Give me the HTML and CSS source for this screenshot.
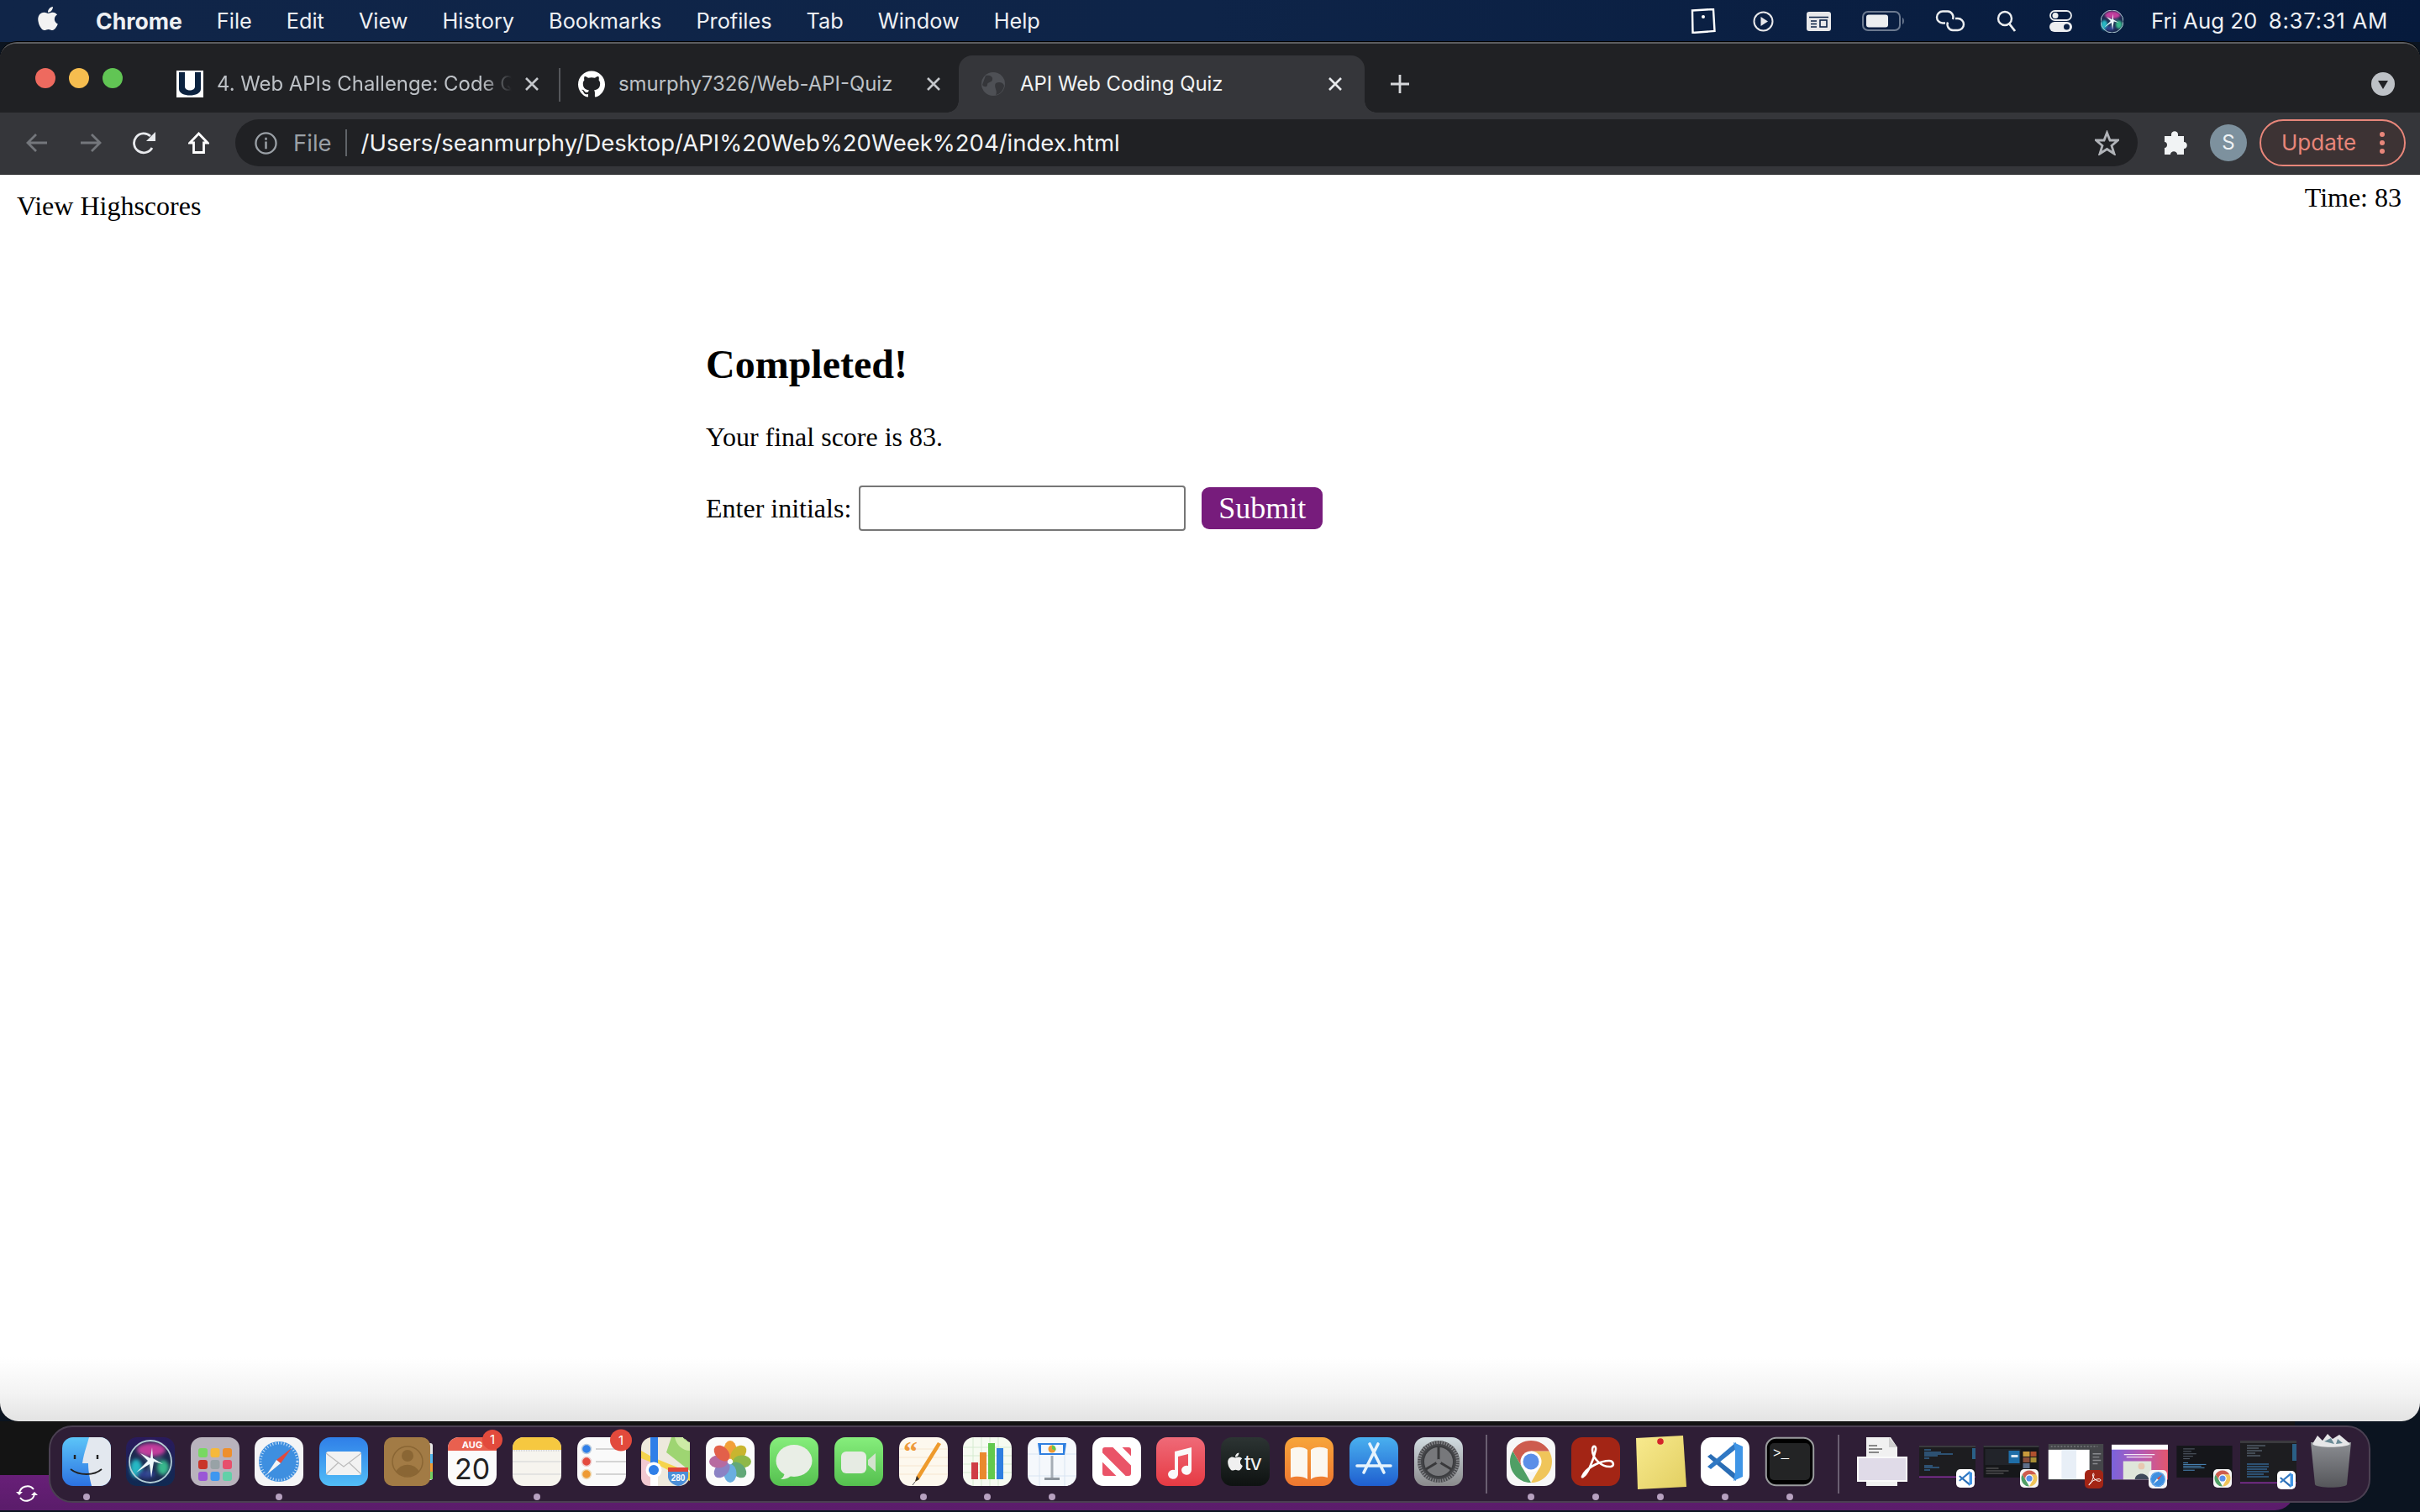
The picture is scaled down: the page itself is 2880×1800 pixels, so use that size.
FILE: index.html
```html
<!DOCTYPE html>
<html lang="en">
<head>
<meta charset="utf-8">
<title>API Web Coding Quiz</title>
<link rel="stylesheet" href="styles.css">
</head>
<body>
<svg class="defs" aria-hidden="true">
  <defs>
    <linearGradient id="gBlue" x1="0" y1="0" x2="0" y2="1"><stop offset="0" stop-color="#2f7fe8"/><stop offset="1" stop-color="#52bdf7"/></linearGradient>
    <linearGradient id="gStore" x1="0" y1="0" x2="0" y2="1"><stop offset="0" stop-color="#49b0ef"/><stop offset="1" stop-color="#1f5fd0"/></linearGradient>
    <linearGradient id="gFinder" x1="0" y1="0" x2="0" y2="1"><stop offset="0" stop-color="#5cc5f8"/><stop offset="1" stop-color="#2c72e2"/></linearGradient>
    <linearGradient id="gGreen" x1="0" y1="0" x2="0" y2="1"><stop offset="0" stop-color="#86ee7c"/><stop offset="1" stop-color="#55c04f"/></linearGradient>
    <linearGradient id="gMusic" x1="0" y1="0" x2="0" y2="1"><stop offset="0" stop-color="#ef6a78"/><stop offset="1" stop-color="#e63a43"/></linearGradient>
    <linearGradient id="gBooks" x1="0" y1="0" x2="0" y2="1"><stop offset="0" stop-color="#f7a53a"/><stop offset="1" stop-color="#ee7730"/></linearGradient>
    <linearGradient id="gGear" x1="0" y1="0" x2="0" y2="1"><stop offset="0" stop-color="#d2dde2"/><stop offset="1" stop-color="#8a8a8c"/></linearGradient>
    <linearGradient id="gNote" x1="0" y1="0" x2="1" y2="1"><stop offset="0" stop-color="#f8ea8e"/><stop offset="1" stop-color="#e2cf62"/></linearGradient>
    <linearGradient id="gTrash" x1="0" y1="0" x2="0" y2="1"><stop offset="0" stop-color="#8b8d92"/><stop offset="1" stop-color="#55565a"/></linearGradient>
    <linearGradient id="gTv" x1="0" y1="0" x2="0" y2="1"><stop offset="0" stop-color="#2c3433"/><stop offset="1" stop-color="#0e1211"/></linearGradient>
    <linearGradient id="gSiriBg" x1="0" y1="0" x2="0" y2="1"><stop offset="0" stop-color="#2a1a5c"/><stop offset="1" stop-color="#0f2a52"/></linearGradient>
    <linearGradient id="gPromo" x1="0" y1="0" x2="1" y2="0"><stop offset="0" stop-color="#7a63dc"/><stop offset="0.55" stop-color="#b85ab0"/><stop offset="1" stop-color="#e4566e"/></linearGradient>
    <filter id="soft" x="-30%" y="-30%" width="160%" height="160%"><feGaussianBlur stdDeviation="2.200"/></filter>
    <path id="apple" d="M318.7 268.7c-.2-36.7 16.4-64.4 50-84.8-18.8-26.9-47.2-41.7-84.7-44.6-35.5-2.8-74.3 20.7-88.5 20.7-15 0-49.4-19.7-76.4-19.7C63.3 141.2 4 184.8 4 273.5q0 39.3 14.4 81.2c12.8 36.7 59 126.7 107.2 125.2 25.2-.6 43-17.9 75.8-17.9 31.8 0 48.3 17.9 76.4 17.9 48.6-.7 90.4-82.5 102.6-119.3-65.2-30.7-61.7-90-61.7-91.9zm-56.6-164.2c27.3-32.4 24.8-61.9 24-72.5-24.1 1.4-52 16.4-67.9 34.9-17.5 19.8-27.8 44.3-25.6 71.9 26.1 2 49.9-11.4 69.5-34.3z"/>
    <symbol id="i-siri" viewBox="0 0 58 58">
      <circle cx="29" cy="29" r="25" fill="#1c2a50"/>
      <g filter="url(#soft)">
        <ellipse cx="30" cy="15" rx="17" ry="8" fill="#c23c9c"/>
        <ellipse cx="12" cy="37" rx="7" ry="11" fill="#28b8c4"/>
        <ellipse cx="44" cy="36" rx="7" ry="9" fill="#38b88c"/>
        <ellipse cx="24" cy="44" rx="11" ry="5" fill="#2e3f8c"/>
      </g>
      <circle cx="29" cy="29" r="25" fill="none" stroke="#b4cfd6" stroke-width="1.800"/>
      <g filter="url(#soft)" opacity="0.700"><path d="M15 16L31 30 26 47 28 31ZM46 22L30 28 48 40 33 30Z" fill="#8fe0d8"/></g>
      <path d="M31 12L32 25 44 32 33 29 30 48 28 32 12 42 26 28 17 19 29 25Z" fill="#eef8fb"/>
    </symbol>
    <symbol id="i-chrome" viewBox="0 0 58 58">
      <rect width="58" height="58" rx="13" fill="#f7f7f7"/>
      <path fill="#4f9f65" d="M7.35 16.5L18.2 35.2 29 54A25 25 0 0 1 7.35 16.5Z"/>
      <path fill="#f0c55a" d="M50.65 16.5A25 25 0 0 1 29 54L39.8 35.2 29 16.5Z"/>
      <path fill="#cd5c4e" d="M7.35 16.5A25 25 0 0 1 50.65 16.5L29 16.5 18.2 35.2Z"/>
      <circle cx="29" cy="29" r="12.5" fill="#fff"/><circle cx="29" cy="29" r="9.5" fill="#5b8fe8"/>
    </symbol>
    <symbol id="i-acrobat" viewBox="0 0 58 58">
      <rect width="58" height="58" rx="13" fill="#a32515"/>
      <path fill="none" stroke="#fff" stroke-width="2.6" d="M14 47C19 44 26 29 29 15 30 10 25 9 25 15 25 25 36 36 47 35 52 34 50 28 45 28 35 28 21 35 15 43 13 47 12 48 14 47Z"/>
    </symbol>
    <symbol id="i-vscode" viewBox="0 0 58 58">
      <rect width="58" height="58" rx="13" fill="#fff"/>
      <path fill="#2a6db5" d="M8 23L12 20 42 44V52Z"/><path fill="#2f78c4" d="M8 35L12 38 42 14V6Z"/>
      <path fill="#3f95e6" d="M39 6L50 11V47L39 52 41 42V16Z"/>
    </symbol>
    <symbol id="i-safari" viewBox="0 0 58 58">
      <rect width="58" height="58" rx="13" fill="#f4f4f6"/>
      <circle cx="29" cy="29" r="24" fill="#3e8fe0"/>
      <circle cx="29" cy="29" r="22" fill="none" stroke="#cfe4f7" stroke-width="3" stroke-dasharray="1 2.4"/>
      <path fill="#e24a3c" d="M44 13L26 27 31 31Z"/><path fill="#f4f4f4" d="M14 45L26 27 31 31Z"/>
    </symbol>
  </defs>
</svg>

<div class="screen">
  <header class="menubar">
    <nav class="menus">
      <svg class="apple" viewBox="0 0 384 512"><use href="#apple" fill="#f2f2f2"/></svg>
      <span class="menu-app">Chrome</span>
      <span>File</span><span>Edit</span><span>View</span><span>History</span><span>Bookmarks</span><span>Profiles</span><span>Tab</span><span>Window</span><span>Help</span>
    </nav>
    <div class="status">
      <svg class="st st-note" viewBox="0 0 30 30"><path d="M2 2.5L27 1 28.5 27 2.5 29Z" fill="none" stroke="#fff" stroke-width="2.4"/><circle cx="15" cy="10" r="2" fill="#fff"/></svg>
      <svg class="st st-play" viewBox="0 0 25 25"><circle cx="12.5" cy="12.5" r="11" fill="none" stroke="#e8e8ea" stroke-width="2"/><path d="M9.5 7L18 12.5 9.5 18Z" fill="#e8e8ea"/></svg>
      <svg class="st st-cmd" viewBox="0 0 29 23"><rect width="29" height="23" rx="3" fill="#e8e8ea"/><path d="M3 6.5H26M5 11H12M5 14.5H12M5 18H12" stroke="#0b2145" stroke-width="1.6"/><rect x="16" y="10" width="8" height="8" fill="none" stroke="#0b2145" stroke-width="1.6"/></svg>
      <svg class="st st-batt" viewBox="0 0 51 24"><rect x="1" y="1" width="44" height="22" rx="6" fill="none" stroke="#6c7a90" stroke-width="2"/><rect x="5" y="4.500" width="26" height="15" rx="3" fill="#eceef0"/><path d="M48 8C50.500 9 50.500 15 48 16Z" fill="#6c7a90"/></svg>
      <svg class="st st-link" viewBox="0 0 36 26"><g fill="none" stroke="#eceef0" stroke-width="2.4"><path d="M12 15.500H9A7 7 0 0 1 9 1.500H15A7 7 0 0 1 21 11"/><path d="M24 10H27A7 7 0 0 1 27 24H21A7 7 0 0 1 15 14.500"/></g></svg>
      <svg class="st st-search" viewBox="0 0 24 27"><circle cx="10" cy="10" r="8" fill="none" stroke="#eceef0" stroke-width="2.4"/><path d="M15 16L22 25" stroke="#eceef0" stroke-width="2.8"/></svg>
      <svg class="st st-cc" viewBox="0 0 27 26"><rect x="1" y="1" width="25" height="11" rx="5.500" fill="none" stroke="#eceef0" stroke-width="1.800"/><circle cx="7" cy="6.500" r="3.500" fill="#eceef0"/><rect y="14" width="27" height="12" rx="6" fill="#eceef0"/><circle cx="20.500" cy="20" r="3.500" fill="#0b2145"/></svg>
      <svg class="st st-siri" viewBox="4 4 50 50"><use href="#i-siri" width="58" height="58"/></svg>
      <span class="clock"><span>Fri Aug 20</span><span class="clock-time">8:37:31 AM</span></span>
    </div>
  </header>

  <main class="window">
    <div class="tabstrip">
      <div class="lights"><i class="light red"></i><i class="light yellow"></i><i class="light green"></i></div>
      <div class="tab tab-one">
        <svg class="favicon" viewBox="0 0 32 32"><rect width="32" height="32" fill="#fff"/><path d="M3 2H10V19C10 25 22 25 22 19V2H29V22C29 32 3 32 3 22Z" fill="#0c2340"/></svg>
        <span class="tab-title fade">4. Web APIs Challenge: Code Q</span>
        <svg class="tab-x" viewBox="0 0 18 18"><path d="M2 2L16 16M16 2L2 16" stroke="#c4c7cb" stroke-width="2.600"/></svg>
      </div>
      <i class="tab-sep"></i>
      <div class="tab tab-two">
        <svg class="favicon" viewBox="0 0 24 24"><path fill="#fff" d="M12 .297c-6.630 0-12 5.373-12 12 0 5.303 3.438 9.800 8.205 11.385.6.113.82-.258.82-.577 0-.285-.01-1.040-.015-2.040-3.338.724-4.042-1.610-4.042-1.610C4.422 18.070 3.633 17.700 3.633 17.700c-1.087-.744.084-.729.084-.729 1.205.084 1.838 1.236 1.838 1.236 1.070 1.835 2.809 1.305 3.495.998.108-.776.417-1.305.76-1.605-2.665-.3-5.466-1.332-5.466-5.930 0-1.310.465-2.380 1.235-3.220-.135-.303-.54-1.523.105-3.176 0 0 1.005-.322 3.300 1.230.96-.267 1.980-.399 3-.405 1.020.006 2.040.138 3 .405 2.280-1.552 3.285-1.230 3.285-1.230.645 1.653.24 2.873.12 3.176.765.84 1.230 1.910 1.230 3.220 0 4.610-2.805 5.625-5.475 5.920.42.36.81 1.096.81 2.220 0 1.606-.015 2.896-.015 3.286 0 .315.21.69.825.57C20.565 22.092 24 17.592 24 12.297c0-6.627-5.373-12-12-12"/></svg>
        <span class="tab-title">smurphy7326/Web-API-Quiz</span>
        <svg class="tab-x" viewBox="0 0 18 18"><path d="M2 2L16 16M16 2L2 16" stroke="#c4c7cb" stroke-width="2.600"/></svg>
      </div>
      <div class="tab tab-active">
        <svg class="favicon globe" viewBox="0 0 28 28"><circle cx="14" cy="14" r="14" fill="#4e5055"/><path d="M5 4C10 3 14 5 13 9 12 13 7 11 7 15 7 18 3 18 1 15ZM17 13C21 11 26 12 27 16 26 22 22 26 17 27 20 22 14 18 17 13Z" fill="#35363a"/></svg>
        <span class="tab-title">API Web Coding Quiz</span>
        <svg class="tab-x" viewBox="0 0 18 18"><path d="M2 2L16 16M16 2L2 16" stroke="#e8eaed" stroke-width="2.600"/></svg>
      </div>
      <svg class="tab-plus" viewBox="0 0 24 24"><path d="M12 1V23M1 12H23" stroke="#d5d7da" stroke-width="2.800"/></svg>
      <span class="tab-search"><svg viewBox="0 0 28 28"><circle cx="14" cy="14" r="14" fill="#bdc1c6"/><path d="M8 10H20L14 20Z" fill="#202124"/></svg></span>
    </div>

    <div class="toolbar">
      <span class="tool"><svg class="t-arrow" viewBox="0 0 26 24"><path d="M25 12H3M12 2L2 12 12 22" fill="none" stroke="#74777c" stroke-width="2.800"/></svg></span>
      <span class="tool"><svg class="t-arrow" viewBox="0 0 26 24"><path d="M1 12H23M14 2L24 12 14 22" fill="none" stroke="#74777c" stroke-width="2.800"/></svg></span>
      <span class="tool"><svg class="t-reload" viewBox="0 0 28 28"><path d="M23 20A11.500 11.500 0 1 1 21 6" fill="none" stroke="#e8eaed" stroke-width="2.800"/><path d="M27 1V12H16Z" fill="#e8eaed"/></svg></span>
      <span class="tool"><svg class="t-home" viewBox="0 0 25 26"><path d="M12.500 2L23 13H18.500V24.500H6.500V13H2Z" fill="none" stroke="#fff" stroke-width="2.800"/></svg></span>
      <div class="omnibox">
        <svg class="o-info" viewBox="0 0 28 28"><circle cx="14" cy="14" r="12.500" fill="none" stroke="#9aa0a6" stroke-width="2.400"/><path d="M14 12V21M14 7V10" stroke="#9aa0a6" stroke-width="2.600"/></svg>
        <span class="o-file">File</span>
        <i class="o-sep"></i>
        <span class="o-url">/Users/seanmurphy/Desktop/API%20Web%20Week%204/index.html</span>
        <svg class="o-star" viewBox="0 0 29 30"><path d="M14.500 3L18 12H27.500L20 18.500 23 28 14.500 22.500 6 28 9 18.500 1.500 12H11Z" fill="none" stroke="#b0b3b8" stroke-width="2.800"/></svg>
      </div>
      <span class="tool"><svg class="t-puzzle" viewBox="0 0 29 30"><path d="M10 5C10 0 18 0 18 5V7H25V14C30 14 30 22 25 22V29H17C17 24 9 24 9 29H2V21C6 21 6 14 2 14V7H10Z" fill="#f1f3f4"/></svg></span>
      <span class="tool"><span class="avatar">S</span></span>
      <div class="update">
        <span>Update</span>
        <svg class="u-dots" viewBox="0 0 6 26"><circle cx="3" cy="3" r="3" fill="#e8867a"/><circle cx="3" cy="13" r="3" fill="#e8867a"/><circle cx="3" cy="23" r="3" fill="#e8867a"/></svg>
      </div>
    </div>

    <div class="page">
      <div class="page-head">
        <a class="highscores">View Highscores</a>
        <span class="timer">Time: 83</span>
      </div>
      <section class="quiz">
        <h2 class="quiz-title">Completed!</h2>
        <p class="quiz-score">Your final score is 83.</p>
        <form class="quiz-form">
          <label class="quiz-label" for="initials">Enter initials:</label>
          <input class="quiz-input" id="initials" type="text">
          <button class="quiz-submit" type="button">Submit</button>
        </form>
      </section>
    </div>
  </main>

  <footer class="desk">
    <svg class="sync" viewBox="0 0 28 22"><g fill="none" stroke="#fff" stroke-width="2"><path d="M5 11A9.500 9.500 0 0 1 22 6"/><path d="M23 11A9.500 9.500 0 0 1 6 16"/></g><path d="M1 9L5 13 9 9ZM19 13L23 9 27 13Z" fill="#fff"/></svg>
    <div class="dock">
      <div class="app on"><svg class="ico" viewBox="0 0 58 58"><rect width="58" height="58" rx="13" fill="url(#gFinder)"/><path d="M32 0H45A13 13 0 0 1 58 13V45A13 13 0 0 1 45 58H35C32 46 31 38 31 31H24C26 18 30 8 32 0Z" fill="#e3e8ef"/><path d="M15 21V26M42 21V26" stroke="#222" stroke-width="2.400"/><path d="M10 38C20 46 38 46 47 38" fill="none" stroke="#222" stroke-width="1.800"/></svg></div>
      <div class="app"><svg class="ico" viewBox="0 0 58 58"><rect width="58" height="58" rx="13" fill="url(#gSiriBg)"/><use href="#i-siri" width="58" height="58"/></svg></div>
      <div class="app"><svg class="ico" viewBox="0 0 58 58"><rect width="58" height="58" rx="13" fill="#b9b3bd"/><g><rect x="9" y="13" width="11" height="11" rx="3" fill="#78d862"/><rect x="23.500" y="13" width="11" height="11" rx="3" fill="#f6b93b"/><rect x="38" y="13" width="11" height="11" rx="3" fill="#ee8f2c"/><rect x="9" y="27" width="11" height="11" rx="3" fill="#c93529"/><rect x="23.500" y="27" width="11" height="11" rx="3" fill="#98a2a6"/><rect x="38" y="27" width="11" height="11" rx="3" fill="#e7506c"/><rect x="9" y="41" width="11" height="11" rx="3" fill="#9a56d6"/><rect x="23.500" y="41" width="11" height="11" rx="3" fill="#3e97f0"/><rect x="38" y="41" width="11" height="11" rx="3" fill="#62d0a8"/></g></svg></div>
      <div class="app on"><svg class="ico" viewBox="0 0 58 58"><use href="#i-safari"/></svg></div>
      <div class="app"><svg class="ico" viewBox="0 0 58 58"><rect width="58" height="58" rx="13" fill="url(#gBlue)"/><rect x="8" y="17" width="42" height="28" rx="3" fill="#f2f2f2"/><path d="M8 19L29 35 50 19M8 44L23 30M50 44L35 30" fill="none" stroke="#bcbcbc" stroke-width="1.200"/></svg></div>
      <div class="app"><svg class="ico" viewBox="0 0 58 58"><rect x="50" y="7" width="8" height="44" rx="3" fill="#e6e6e6"/><rect x="52" y="20" width="6" height="11" fill="#54b8f0"/><rect x="52" y="31" width="6" height="10" fill="#ef9a34"/><rect x="52" y="41" width="6" height="9" fill="#74cf62"/><rect width="55" height="58" rx="10" fill="#a27b45"/><circle cx="28" cy="29" r="18" fill="none" stroke="#8a6634" stroke-width="1.500"/><circle cx="28" cy="22" r="7" fill="#8a6634"/><path d="M14 41C20 30 36 30 42 41 36 48 20 48 14 41Z" fill="#8a6634"/></svg></div>
      <div class="app"><svg class="ico ico-badged" viewBox="0 0 58 58"><rect width="58" height="58" rx="13" fill="#fbfbfb"/><path d="M0 16V13A13 13 0 0 1 13 0H45A13 13 0 0 1 58 13V16Z" fill="#e9604f"/><text class="ico-aug" x="29" y="13" text-anchor="middle">AUG</text><text class="ico-day" x="29" y="50" text-anchor="middle">20</text><circle cx="53" cy="3" r="12" fill="#e24a3c"/><text class="ico-num" x="53" y="8" text-anchor="middle">1</text></svg></div>
      <div class="app on"><svg class="ico" viewBox="0 0 58 58"><rect width="58" height="58" rx="13" fill="#f6f4ee"/><path d="M0 15V13A13 13 0 0 1 13 0H45A13 13 0 0 1 58 13V15Z" fill="#f6c840"/><path d="M0 16H58" stroke="#bbb" stroke-dasharray="1 1"/><path d="M0 29H58M0 44H58" stroke="#ddd" stroke-width="1.400"/></svg></div>
      <div class="app"><svg class="ico ico-badged" viewBox="0 0 58 58"><rect width="58" height="58" rx="13" fill="#fafafa"/><circle cx="11" cy="14" r="5.500" fill="#2f7fe8" stroke="#bcd" stroke-width="1.500"/><circle cx="11" cy="29" r="5.500" fill="#e44a3e" stroke="#ecc" stroke-width="1.500"/><circle cx="11" cy="44" r="5.500" fill="#ee9a33" stroke="#edb" stroke-width="1.500"/><path d="M22 14H58M22 29H58M22 44H58" stroke="#c8c8c8" stroke-width="1.400"/><circle cx="52" cy="3.500" r="13" fill="#e24a3c"/><text class="ico-num" x="52" y="9" text-anchor="middle">1</text></svg></div>
      <div class="app"><svg class="ico" viewBox="0 0 58 58"><rect width="58" height="58" rx="13" fill="#eee9dd"/><path d="M36 0H45A13 13 0 0 1 58 13V40L30 18Z" fill="#9ed572"/><path d="M0 20L14 28V58H10C4 58 0 54 0 48Z" fill="#f2c9d1"/><path d="M0 16L14 24 58 42V52L44 45 20 33 0 25Z" fill="#f5d44c"/><path d="M40 0C42 10 50 16 58 16V6C52 4 50 2 50 0Z" fill="#cdeba6"/><rect x="11" y="0" width="9" height="36" fill="#2f7fe8"/><rect x="11" y="40" width="9" height="18" fill="#fff"/><circle cx="15" cy="39" r="9.500" fill="#fff"/><circle cx="15" cy="39" r="6" fill="#2f7fe8"/><path d="M32 36L44 36 56 36V48C54 54 48 58 44 58 38 57 32 52 32 47Z" fill="#4c8fd8"/><rect x="32" y="36" width="24" height="5" fill="#e0453a"/><text class="ico-road" x="44" y="52" text-anchor="middle">280</text></svg></div>
      <div class="app"><svg class="ico" viewBox="0 0 58 58"><rect width="58" height="58" rx="13" fill="#fbfbfb"/><g class="petals"><ellipse cx="29" cy="15" rx="7.500" ry="11" fill="#f2a03a"/><ellipse cx="29" cy="15" rx="7.500" ry="11" fill="#c9b52f" transform="rotate(45 29 29)"/><ellipse cx="29" cy="15" rx="7.500" ry="11" fill="#8fb848" transform="rotate(90 29 29)"/><ellipse cx="29" cy="15" rx="7.500" ry="11" fill="#62a878" transform="rotate(135 29 29)"/><ellipse cx="29" cy="15" rx="7.500" ry="11" fill="#6aaee0" transform="rotate(180 29 29)"/><ellipse cx="29" cy="15" rx="7.500" ry="11" fill="#8b82c4" transform="rotate(225 29 29)"/><ellipse cx="29" cy="15" rx="7.500" ry="11" fill="#b76aa0" transform="rotate(270 29 29)"/><ellipse cx="29" cy="15" rx="7.500" ry="11" fill="#e2604a" transform="rotate(315 29 29)"/></g></svg></div>
      <div class="app"><svg class="ico" viewBox="0 0 58 58"><rect width="58" height="58" rx="13" fill="url(#gGreen)"/><ellipse cx="29" cy="28" rx="21.500" ry="19" fill="#e9eee6"/><path d="M18 42C17 47 15 49 13 50 19 50 24 48 26 45Z" fill="#e9eee6"/></svg></div>
      <div class="app"><svg class="ico" viewBox="0 0 58 58"><rect width="58" height="58" rx="13" fill="url(#gGreen)"/><rect x="8" y="17" width="30" height="26" rx="6" fill="#e6ebe3"/><path d="M40 27L49 19V41L40 33Z" fill="#d3e2cf"/></svg></div>
      <div class="app on"><svg class="ico" viewBox="0 0 58 58"><rect width="58" height="58" rx="13" fill="#fdf8ee"/><path d="M0 14H58M0 24H58M0 34H58M0 44H58" stroke="#f6e6d0" stroke-width="1"/><text class="ico-quote" x="5" y="28">“</text><path d="M46 6L50 8 24 50 19 53 21 46Z" fill="#ee9a2c"/><path d="M21 46L19 53 24 50Z" fill="#333"/><path d="M19 53L16 57" stroke="#555"/></svg></div>
      <div class="app on"><svg class="ico" viewBox="0 0 58 58"><rect width="58" height="58" rx="13" fill="#f6fbf1"/><path d="M0 12H58M0 22H58M0 32H58M0 42H58M12 0V58M22 0V58M32 0V58M42 0V58" stroke="#d5ebd0"/><rect x="10" y="30" width="8" height="20" fill="#cf3d46"/><rect x="20" y="18" width="8" height="32" fill="#ea8a2e"/><rect x="30" y="7" width="8" height="43" fill="#62c94f"/><rect x="40" y="13" width="8" height="37" fill="#2f7fe0"/></svg></div>
      <div class="app on"><svg class="ico" viewBox="0 0 58 58"><rect width="58" height="58" rx="13" fill="#f5f8fc"/><path d="M0 20H58M0 46H58M14 20V58M44 20V58" stroke="#d8e4f2"/><path d="M12 7H46L44 21H14Z" fill="#2f7fe0"/><path d="M16 9H42V19H16Z" fill="#f4f8fc"/><circle cx="29" cy="14" r="4.500" fill="#ef9a33"/><path d="M29 14V9.500A4.500 4.500 0 0 1 33 16Z" fill="#62c94f"/><rect x="27.500" y="22" width="3" height="27" fill="#a6adb5"/><rect x="20" y="48" width="18" height="3" fill="#8d949c"/></svg></div>
      <div class="app"><svg class="ico" viewBox="0 0 58 58"><rect width="58" height="58" rx="13" fill="#fff"/><rect x="12" y="12" width="34" height="34" rx="3" fill="#ea5468"/><path d="M25 7L51 33" stroke="#fff" stroke-width="8"/><path d="M7 19L38 50" stroke="#fff" stroke-width="8"/></svg></div>
      <div class="app"><svg class="ico" viewBox="0 0 58 58"><rect width="58" height="58" rx="13" fill="url(#gMusic)"/><path d="M22 17L42 12V39A6 5.500 0 1 1 38 34V20L26 23V44A6 5.500 0 1 1 22 39Z" fill="#fafafa"/></svg></div>
      <div class="app"><svg class="ico" viewBox="0 0 58 58"><rect width="58" height="58" rx="13" fill="url(#gTv)"/><svg x="7" y="17" width="20" height="24" viewBox="0 0 384 512"><use href="#apple" fill="#f0f0f0"/></svg><text class="ico-tv" x="28" y="39">tv</text></svg></div>
      <div class="app"><svg class="ico" viewBox="0 0 58 58"><rect width="58" height="58" rx="13" fill="url(#gBooks)"/><path d="M7 14C13 11 22 11 27 15V50C22 46 13 46 7 48ZM51 14C45 11 36 11 31 15V50C36 46 45 46 51 48Z" fill="#fbf7f0"/></svg></div>
      <div class="app"><svg class="ico" viewBox="0 0 58 58"><rect width="58" height="58" rx="13" fill="url(#gStore)"/><path d="M24 8L41 42M34 8L17 42M9 34H49" stroke="#e6f3fc" stroke-width="3.600" stroke-linecap="round"/></svg></div>
      <div class="app"><svg class="ico" viewBox="0 0 58 58"><rect width="58" height="58" rx="13" fill="url(#gGear)"/><circle cx="29" cy="29" r="25" fill="#46474a"/><circle cx="29" cy="29" r="23" fill="none" stroke="#85868a" stroke-width="4" stroke-dasharray="1.500 1.500"/><circle cx="29" cy="29" r="18" fill="#77787b" stroke="#3c3d40" stroke-width="2"/><path d="M29 29V12M29 29L14 38M29 29L44 38" stroke="#39393b" stroke-width="3"/><circle cx="29" cy="29" r="3" fill="#77787b"/></svg></div>

      <i class="dock-sep dock-sep-a"></i>

      <div class="app app-wide on"><svg class="ico" viewBox="0 0 58 58"><use href="#i-chrome"/></svg></div>
      <div class="app app-wide on"><svg class="ico" viewBox="0 0 58 58"><use href="#i-acrobat"/></svg></div>
      <div class="app app-wide on"><svg class="ico" viewBox="0 0 58 58"><path d="M0 1L56 -2 60 59 2 62Z" fill="url(#gNote)"/><circle cx="29" cy="5" r="3.800" fill="#d4242a"/></svg></div>
      <div class="app app-wide on"><svg class="ico" viewBox="0 0 58 58"><use href="#i-vscode"/></svg></div>
      <div class="app app-wide on"><svg class="ico" viewBox="0 0 58 58"><rect x="0.800" y="0.800" width="56.400" height="56.400" rx="12" fill="#000" stroke="#9a9c9e" stroke-width="2"/><rect x="5" y="7" width="48" height="44" rx="5" fill="#232425"/><text class="ico-term" x="9" y="24">&gt;_</text></svg></div>

      <i class="dock-sep dock-sep-b"></i>

      <div class="recent">
        <svg class="doc" viewBox="0 0 60 58"><path d="M11 0H40L48 12V58H11Z" fill="#f1f1f1"/><path d="M38 0L48 12H38Z" fill="#cfcfcf"/><path d="M14 10H24M14 14H30M14 18H26" stroke="#666" stroke-width="1.500"/><rect x="1" y="24" width="58" height="28" fill="#e0dbe8" stroke="#fafafa" stroke-width="2"/></svg>
        <div class="thumb thumb-short">
          <svg class="thumb-art" viewBox="0 0 67 38"><rect width="67" height="38" fill="#1d1d20"/><rect width="67" height="2" fill="#3a3a3e"/><rect x="63" y="3" width="4" height="13" fill="#2a5f86"/><path d="M6 5H14M6 8H26M6 10H40M6 12H22M6 15H12M6 24H16M6 26H24M6 29H13" stroke="#3f86c4" stroke-width="1"/><rect y="36.500" width="67" height="1.500" fill="#8a2fa0"/></svg>
          <svg class="badge" viewBox="0 0 58 58"><use href="#i-vscode"/></svg>
        </div>
        <div class="thumb thumb-short">
          <svg class="thumb-art" viewBox="0 0 66 38"><rect width="66" height="38" fill="#16171a"/><rect width="66" height="2" fill="#37383c"/><rect x="2" y="4" width="42" height="19" fill="#22242a"/><rect x="30" y="6" width="13" height="15" fill="#1f6ea8"/><rect x="33" y="11" width="8" height="3" fill="#dbe8f2"/><rect x="47" y="7" width="8" height="6" fill="#c89a3c"/><rect x="47" y="14" width="8" height="6" fill="#8a4f3c"/><rect x="47" y="21" width="8" height="6" fill="#5f6f8a"/><rect x="56" y="7" width="7" height="6" fill="#b0512e"/><rect x="56" y="14" width="7" height="6" fill="#a89036"/><path d="M3 27H18M3 30H30M3 33H24" stroke="#666" stroke-width="1"/></svg>
          <svg class="badge" viewBox="0 0 58 58"><use href="#i-chrome"/></svg>
        </div>
        <div class="thumb thumb-mid">
          <svg class="thumb-art" viewBox="0 0 67 44"><rect width="67" height="44" fill="#45464a"/><rect y="7" width="50" height="36" fill="#fff"/><rect x="16" y="7" width="18" height="36" fill="#e8eff7"/><path d="M54 12H64M54 16H62M54 20H64M54 24H60" stroke="#8a8b8f" stroke-width="1.500"/><path d="M3 3H60" stroke="#77787c" stroke-width="1.500" stroke-dasharray="2 2"/></svg>
          <svg class="badge" viewBox="0 0 58 58"><use href="#i-acrobat"/></svg>
        </div>
        <div class="thumb thumb-mid">
          <svg class="thumb-art" viewBox="0 0 68 42"><rect width="68" height="42" fill="#fff"/><rect y="6" width="68" height="36" fill="url(#gPromo)"/><path d="M15 12H52M18 15H49" stroke="#f4e8f4" stroke-width="1.200"/><rect x="14" y="20" width="34" height="22" fill="#dfe6da"/><circle cx="36" cy="26" r="4" fill="#e8c8b0"/><path d="M28 42C29 33 43 33 45 42Z" fill="#3f4a5a"/></svg>
          <svg class="badge" viewBox="0 0 58 58"><use href="#i-safari"/></svg>
        </div>
        <div class="thumb thumb-short">
          <svg class="thumb-art" viewBox="0 0 68 39"><rect width="68" height="39" fill="#15161a"/><path d="M8 4H22M8 7H18M8 10H24M8 13H20M8 16H16" stroke="#56606c" stroke-width="1"/><path d="M8 21H14M8 23H36M8 25H30M8 27H34M8 30H22" stroke="#4d8fc4" stroke-width="1"/></svg>
          <svg class="badge" viewBox="0 0 58 58"><use href="#i-chrome"/></svg>
        </div>
        <div class="thumb thumb-tall">
          <svg class="thumb-art" viewBox="0 0 67 51"><rect width="67" height="51" fill="#1d1d20"/><rect width="67" height="3" fill="#3a3a3e"/><rect x="62" y="4" width="5" height="20" fill="#2a5f86"/><path d="M8 6H30M8 9H22M8 12H26M8 15H18M8 18H24" stroke="#6a7a88" stroke-width="1"/><path d="M8 28H34M8 31H34M8 34H32M8 37H34M8 40H28M8 43H34" stroke="#3f86c4" stroke-width="1.200"/><rect y="49.500" width="67" height="1.500" fill="#8a2fa0"/></svg>
          <svg class="badge" viewBox="0 0 58 58"><use href="#i-vscode"/></svg>
        </div>
        <svg class="trash" viewBox="0 0 52 66"><path d="M2 10L7 60C8 65 44 65 45 60L50 10Z" fill="url(#gTrash)"/><path d="M4 12L10 2 16 8 22 0 28 6 36 1 42 6 49 12C44 17 8 17 4 12Z" fill="#e6e6e8"/><path d="M18 9L26 5 30 12ZM34 6L40 11 32 12Z" fill="#6a8a96"/></svg>
      </div>
    </div>
  </footer>
</div>
</body>
</html>
```
FILE: styles.css
```css
* { box-sizing: border-box; }
html, body { margin: 0; padding: 0; }
body { width: 2880px; height: 1800px; overflow: hidden; background: #0b1420; }
i { display: block; }
svg { display: block; flex: none; }

.defs { position: absolute; width: 0; height: 0; }

.screen { width: 2880px; height: 1800px; display: flex; flex-direction: column; }

/* menu bar */
.menubar {
  height: 50px; flex: none; display: flex; justify-content: space-between; align-items: center;
  background: linear-gradient(90deg, #102548 0, #0e2448 50%, #061a3c 100%);
  color: #eef0f3; font: 400 25.300px/50px Inter, "Noto Sans", sans-serif;
}
.menus { display: flex; align-items: center; gap: 41px; padding-left: 44px; }
.apple { width: 26px; height: 32px; margin-top: -6px; margin-right: 3px; }
.menu-app { font-size: 26.600px; font-weight: 700; }
.status { display: flex; align-items: center; padding-right: 38px; }
.st-note { width: 30px; height: 30px; }
.st-play { width: 25px; height: 25px; margin-left: 44px; }
.st-cmd { width: 29px; height: 23px; margin-left: 39px; }
.st-batt { width: 51px; height: 24px; margin-left: 37px; }
.st-link { width: 36px; height: 26px; margin-left: 36px; }
.st-search { width: 24px; height: 27px; margin-left: 37px; }
.st-cc { width: 27px; height: 26px; margin-left: 39px; }
.st-siri { width: 27px; height: 27px; margin-left: 34px; }
.clock { width: 282px; margin-left: 33px; display: flex; justify-content: space-between; white-space: nowrap; font-size: 25.800px; }
.clock-time { letter-spacing: 0.700px; }

/* browser window */
.window {
  flex: 1; min-height: 0; display: flex; flex-direction: column;
  border-radius: 20px 20px 22px 22px; overflow: hidden; background: #202124;
  border-top: 2px solid #5b5c5f; box-shadow: 0 -1px 0 #000;
}
.tabstrip { height: 82px; flex: none; padding-top: 14px; display: flex; align-items: stretch; position: relative; background: #202124; font: 400 23.900px/32px Inter, "Noto Sans", sans-serif; color: #bdc1c6; }
.lights { width: 189px; flex: none; display: flex; gap: 16px; padding: 15px 0 0 42px; }
.light { width: 24px; height: 24px; border-radius: 50%; }
.red { background: #ee6a5f; }
.yellow { background: #f6bd4f; }
.green { background: #61c554; }

.tab { display: flex; align-items: center; position: relative; }
.tab-one { width: 476px; padding: 0 23px 0 21px; }
.tab-two { width: 476px; padding: 0 21px 0 23px; margin-left: -2px; }
.tab-active { width: 483px; padding: 0 26px 0 27px; background: #35363a; color: #f1f3f4; border-radius: 16px 16px 0 0; }
.tab-active::before, .tab-active::after { content: ""; position: absolute; bottom: 0; width: 14px; height: 14px; }
.tab-active::before { left: -14px; background: radial-gradient(circle at 0 0, transparent 13.500px, #35363a 14px); }
.tab-active::after { right: -14px; background: radial-gradient(circle at 100% 0, transparent 13.500px, #35363a 14px); }
.tab-sep { width: 2px; height: 40px; margin: 15px 0 0 0; background: #55575b; flex: none; }
.favicon { width: 32px; height: 32px; margin-right: 16px; }
.globe { width: 28px; height: 28px; margin-right: 18px; }
.tab-title { flex: 1; min-width: 0; white-space: nowrap; }
.fade { -webkit-mask-image: linear-gradient(90deg, #000 90%, transparent 100%); mask-image: linear-gradient(90deg, #000 90%, transparent 100%); margin-right: 15px; }
.tab-x { width: 18px; height: 18px; }
.tab-plus { width: 24px; height: 24px; align-self: center; margin-left: 30px; }
.tab-search { margin-left: auto; margin-right: 30px; align-self: center; }
.tab-search svg { width: 28px; height: 28px; }

.toolbar { height: 74px; flex: none; display: flex; align-items: center; padding: 0 17px 1px 12px; background: #35363a; border-bottom: 1px solid #202124; }
.tool { width: 64px; flex: none; display: flex; justify-content: center; align-items: center; }
.t-arrow { width: 26px; height: 24px; }
.t-reload { width: 28px; height: 28px; }
.t-home { width: 25px; height: 26px; }
.t-puzzle { width: 29px; height: 30px; }
.avatar { width: 44px; height: 44px; border-radius: 50%; background: #7d919e; color: #eef2f4; display: flex; align-items: center; justify-content: center; font: 400 24px/1 Inter, sans-serif; }
.omnibox { flex: 1; height: 56px; margin: 0 12px; border-radius: 28px; background: #202124; display: flex; align-items: center; padding: 0 22px 0 23px; font: 400 27.500px/1.200 Inter, "Noto Sans", sans-serif; }
.o-info { width: 27px; height: 27px; }
.o-file { margin-left: 19px; color: #9aa0a6; }
.o-sep { width: 2px; height: 32px; background: #5f6368; margin: 0 16.500px; }
.o-url { flex: 1; color: #f1f3f4; white-space: nowrap; }
.o-star { width: 29px; height: 30px; }
.update { width: 174px; height: 56px; margin-left: 5px; flex: none; border: 2px solid #e8867a; border-radius: 28px; background: #3d3334; color: #e8867a; display: flex; align-items: center; justify-content: space-between; padding: 0 23px 0 24px; font: 400 26px/1.200 Inter, "Noto Sans", sans-serif; }
.u-dots { width: 6px; height: 26px; }

/* quiz page */
.page { flex: 1; min-height: 0; background: linear-gradient(to top, #e3e3e3 0, #f3f3f3 32px, #fff 76px); color: #000; font: 400 32px/37px "Liberation Serif", "Times New Roman", serif; }
.page-head { display: flex; justify-content: space-between; align-items: flex-start; padding: 0 22px 0 20px; height: 130px; }
.highscores { margin-top: 19px; }
.timer { margin-top: 9px; }
.quiz { width: 1200px; margin: 0 auto; }
.quiz-title { margin: 0; padding-top: 68px; font: 700 48px/55px "Liberation Serif", "Times New Roman", serif; }
.quiz-score { margin: 41px 0 0; }
.quiz-form { display: flex; align-items: center; margin-top: 39px; }
.quiz-input { width: 389px; height: 54px; margin: 0 19px 0 9px; padding: 2px; border: 2px solid #767676; border-radius: 4px; background: #fff; }
.quiz-submit { width: 144px; height: 50px; padding: 0; border: 0; border-radius: 9px; background: #771c7c; color: #fff; font: 400 36px/1 "Liberation Serif", "Times New Roman", serif; }

/* desktop + dock */
.desk { height: 108px; flex: none; position: relative; background: #0b1420; }
.desk::before { content: ""; position: absolute; left: 0; top: 0; width: 2731px; height: 106px; border-radius: 0 0 24px 0; background: linear-gradient(#141414 0, #141414 64px, #681f78 64px, #5a1c6a 100%); }
.sync { position: absolute; left: 18px; top: 75px; width: 28px; height: 22px; }
.dock {
  position: absolute; left: 58px; top: 5px; width: 2763px; height: 92px;
  display: flex; align-items: flex-start; padding: 12px 0 0 4.200px;
  border: 2px solid #4b4052; border-radius: 28px; background: #2f1e36;
}
.app { width: 76.640px; flex: none; display: flex; flex-direction: column; align-items: center; }
.app-wide { width: 77px; }
.ico { width: 58px; height: 58px; overflow: visible; }
.app::after { content: ""; width: 8px; height: 8px; margin-top: 9px; border-radius: 50%; background: transparent; }
.app.on::after { background: #b7a1c0; }
.ico-aug { font: 700 11px Inter, sans-serif; fill: #fff; }
.ico-day { font: 400 34px Inter, sans-serif; fill: #222; }
.ico-num { font: 400 15px Inter, sans-serif; fill: #fff; }
.ico-road { font: 700 10px "Liberation Sans", sans-serif; fill: #fff; }
.ico-quote { font: 700 34px "Liberation Serif", serif; fill: #ee9a3c; }
.ico-tv { font: 500 26px "Liberation Sans", sans-serif; fill: #f0f0f0; }
.ico-term { font: 400 16px "Liberation Mono", monospace; fill: #fff; }
.dock-sep { width: 2px; height: 70px; flex: none; margin-top: -3px; background: #6b5f72; }
.dock-sep-a { margin-left: 18px; margin-right: 13.500px; }
.dock-sep-b { margin-left: 18.300px; margin-right: 21px; }
.recent { height: 58px; display: flex; align-items: center; gap: 9.500px; }
.doc { width: 60px; height: 58px; margin-right: 4.500px; }
.thumb { width: 67px; position: relative; flex: none; }
.thumb-short { height: 38px; }
.thumb-mid { height: 43px; }
.thumb-tall { height: 51px; }
.thumb-art { width: 100%; height: 100%; }
.badge { position: absolute; right: 1px; bottom: -12px; width: 22px; height: 22px; }
.thumb-tall .badge { bottom: -7px; }
.thumb-mid .badge { bottom: -10px; }
.trash { width: 52px; height: 66px; margin-left: 5px; }
```
